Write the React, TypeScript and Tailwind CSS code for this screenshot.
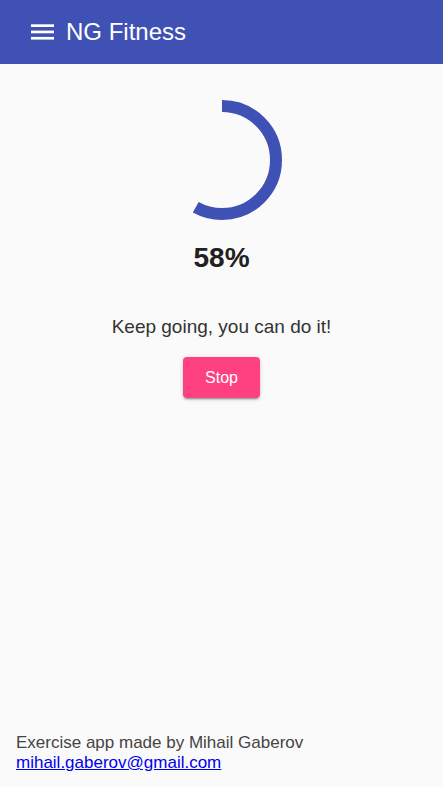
import React from "react";

export default function App() {
  const pct = 58;
  const size = 120;
  const stroke = 12;
  const r = (size - stroke) / 2;
  const c = 2 * Math.PI * r;
  return (
    <div className="min-h-screen flex flex-col bg-[#fafafa]" style={{ fontFamily: '"Liberation Sans", Arial, sans-serif' }}>
      <header className="h-16 bg-[#3f51b5] flex items-center pl-[31px] text-white shrink-0">
        <svg width="23" height="16" viewBox="0 0 23 16" className="mr-[12px]">
          <rect x="0" y="0.3" width="23" height="2.7" fill="white" />
          <rect x="0" y="6.6" width="23" height="2.7" fill="white" />
          <rect x="0" y="12.9" width="23" height="2.7" fill="white" />
        </svg>
        <span className="text-[24px] leading-none">NG Fitness</span>
      </header>
      <main className="flex-1 flex flex-col items-center pt-9">
        <svg width={size} height={size} viewBox={`0 0 ${size} ${size}`} className="-rotate-90">
          <circle
            cx={size / 2}
            cy={size / 2}
            r={r}
            fill="none"
            stroke="#3f51b5"
            strokeWidth={stroke}
            strokeDasharray={`${(c * pct) / 100} ${c}`}
          />
        </svg>
        <div className="mt-[22px] text-[28px] leading-8 font-bold text-[#212121]">{pct}%</div>
        <p className="mt-[41px] text-[19px] leading-6 text-[#333]">Keep going, you can do it!</p>
        <button className="mt-[18px] w-[77px] h-[41px] rounded bg-[#ff4081] text-white text-[16px] shadow-[0_3px_1px_-2px_rgba(0,0,0,0.2),0_2px_2px_0_rgba(0,0,0,0.14),0_1px_5px_0_rgba(0,0,0,0.12)]">
          Stop
        </button>
      </main>
      <footer className="px-4 pb-[13px] text-[17px] leading-5 text-[#444]">
        <div>Exercise app made by Mihail Gaberov</div>
        <a href="#" className="text-[#0000ee] underline">mihail.gaberov@gmail.com</a>
      </footer>
    </div>
  );
}
